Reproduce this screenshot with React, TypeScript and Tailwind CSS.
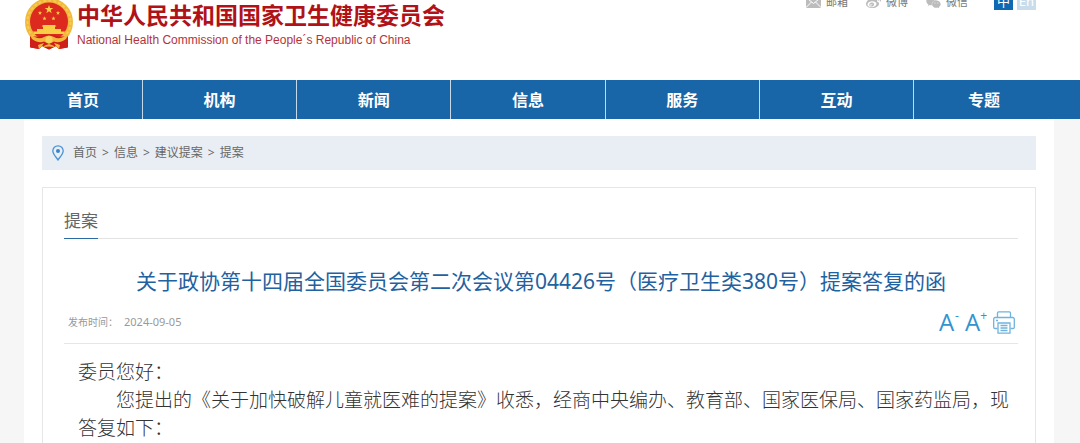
import React from "react";
import { FaWeibo, FaWeixin } from "react-icons/fa";

const navItems = ["首页", "机构", "新闻", "信息", "服务", "互动", "专题"];

const crumbs = ["首页", "信息", "建议提案", "提案"];

const STAR = "0,-1 .24,-.32 .95,-.31 .38,.12 .59,.81 0,.4 -.59,.81 -.38,.12 -.95,-.31 -.24,-.32";

const Emblem = () => (
  <svg viewBox="0 0 50 52" className="h-[52px] w-[50px] shrink-0" aria-hidden="true">
    <path d="M6 34 L6 49.500 L15 51 L18 48 L25 51.500 L32 48 L35 51 L44 49.500 L44 34Z" fill="#cf1f1b" />
    <circle cx="25" cy="24" r="24" fill="#f0b93a" />
    <circle cx="25" cy="24" r="21.500" fill="none" stroke="#f6cb55" strokeWidth="2" strokeDasharray="3 2" />
    <circle cx="25" cy="23.500" r="19" fill="#dc2a1e" />
    <g fill="#f9cf45">
      <polygon points={STAR} transform="translate(25 11.500) scale(4.500)" />
      <polygon points={STAR} transform="translate(16 15) scale(2.200)" />
      <polygon points={STAR} transform="translate(34 15) scale(2.200)" />
      <polygon points={STAR} transform="translate(20.500 20.500) scale(2.200)" />
      <polygon points={STAR} transform="translate(29.500 20.500) scale(2.200)" />
      <path d="M19 27h12l1.500 1.500H31V31h6v2.500h4L40 36H10l-1-2.500h4V31h6v-2.500h-1.500z" />
    </g>
    <path d="M6 38.500 L15 38.500 Q25 35 35 38.500 L44 38.500 L43 49.500 L35 51 L32 48 L25 51.500 L18 48 L15 51 L7 49.500Z" fill="#cf1f1b" />
    <path d="M5 35 Q14 43 20 39 Q25 36 30 39 Q36 43 45 35 L42 41 Q35 46 30 43.500 L25 46 L20 43.500 Q15 46 8 41Z" fill="#f3b83b" />
    <circle cx="25" cy="41.500" r="3.500" fill="#f8d25c" />
    <path d="M14 47 L20 45 L18 48 L15 51Z M36 47 L30 45 L32 48 L35 51Z M21 47.500 L25 46 L29 47.500 L31 49 L25 48.500 L19 49Z" fill="#f3b83b" />
  </svg>
);

const MailIcon = () => (
  <svg viewBox="0 0 15 12" className="h-3 w-[15px]" aria-hidden="true">
    <rect width="15" height="12" rx="1" fill="#bcbcbc" />
    <path d="M0 1.500 L7.500 7.500 L15 1.500 M0 11.500 L5.500 6 M15 11.500 L9.500 6" fill="none" stroke="#fff" />
  </svg>
);

const PinIcon = () => (
  <svg viewBox="0 0 12 16" className="h-4 w-3" aria-hidden="true">
    <path
      d="M6 15 C4.500 12.500 .8 9 .8 6 A5.200 5.200 0 0 1 11.200 6 C11.200 9 7.500 12.500 6 15Z"
      fill="none"
      stroke="#4b93d4"
      strokeWidth="1.300"
    />
    <circle cx="6" cy="6" r="2" fill="#3a83c8" />
  </svg>
);

const PrintIcon = () => (
  <svg viewBox="0 0 22 23" className="h-[23px] w-[22px]" fill="none" stroke="#6fb3de" strokeWidth="1.300" aria-hidden="true">
    <path d="M4.500 6.500V2a1.200 1.200 0 0 1 1.200-1.200h10.600A1.200 1.200 0 0 1 17.500 2v4.500" />
    <path d="M4.500 17.500H2A1.300 1.300 0 0 1 .7 16.200V8A1.500 1.500 0 0 1 2.200 6.500h17.600A1.500 1.500 0 0 1 21.300 8v8.200a1.300 1.300 0 0 1-1.300 1.300h-2.500" />
    <path d="M5 12h12v10.200H5zM3 9.500h2M7.500 14.500h7M7.500 17h7M7.500 19.500h7" />
  </svg>
);

const Header = () => (
  <header className="flex h-20 justify-between overflow-hidden pr-[18px]">
    <a href="#" className="-mt-0.5 flex items-start gap-[3px]">
      <Emblem />
      <span className="flex flex-col pt-0.5">
        <span className="text-[23px] leading-[30px] font-bold whitespace-nowrap text-[#b01217]">
          中华人民共和国国家卫生健康委员会
        </span>
        <span className="font-['Liberation_Sans',Arial,sans-serif] text-xs leading-5 whitespace-nowrap text-[#b5323a]">
          National Health Commission of the People´s Republic of China
        </span>
      </span>
    </a>
    <div className="-mt-2 flex items-start text-[11px] leading-[18px] text-[#777]">
      <a href="#" className="mr-[18px] flex items-center gap-[5px] leading-5">
        <MailIcon />
        邮箱
      </a>
      <a href="#" className="mr-[18px] flex items-center gap-[5px] leading-5">
        <FaWeibo className="size-[15px] text-[#bcbcbc]" />
        微博
      </a>
      <a href="#" className="mr-[26px] flex items-center gap-[5px] leading-5">
        <FaWeixin className="size-[15px] text-[#bcbcbc]" />
        微信
      </a>
      <a href="#" className="mr-1 w-[19px] bg-[#0f68b2] text-center text-[13px] text-white">
        中
      </a>
      <a href="#" className="w-[19px] bg-[#c9dcec] text-center text-[13px] text-white">
        En
      </a>
    </div>
  </header>
);

const Nav = () => (
  <nav className="bg-[#1865a7] pr-[26px] pl-6">
    <ul className="flex h-[39px] text-base leading-10 font-bold text-white">
      {navItems.map((item) => (
        <li
          key={item}
          className="flex-1 border-r border-[#c5d9ea] text-center first:w-[119px] first:flex-none last:w-[140px] last:flex-none last:border-r-0"
        >
          <a href="#" className="block">
            {item}
          </a>
        </li>
      ))}
    </ul>
  </nav>
);

const Breadcrumb = () => (
  <div className="flex h-[34px] items-center gap-[9px] bg-[#e9eef4] px-2.5 text-xs text-[#666]">
    <PinIcon />
    <div className="flex gap-[5px]">
      {crumbs.map((crumb, i) => (
        <React.Fragment key={crumb}>
          {i > 0 && <span>&gt;</span>}
          <a href="#">{crumb}</a>
        </React.Fragment>
      ))}
    </div>
  </div>
);

const Article = () => (
  <article className="mt-[17px] flex-1 border border-b-0 border-[#e6e6e6] pr-[17px] pl-[21px]">
    <div className="mt-4 flex border-b border-[#e3e3e3]">
      <h2 className="-mb-px border-b border-[#2b6ba3] text-[17px] leading-[34px] text-[#666]">提案</h2>
    </div>
    <h1 className="mt-[26px] text-center text-[21px] leading-8 text-[#1f629f]">
      关于政协第十四届全国委员会第二次会议第04426号（医疗卫生类380号）提案答复的函
    </h1>
    <div className="flex h-[47px] items-center justify-between border-b border-[#e6e6e6] pt-1 pr-[3px] pl-1">
      <p className="flex items-center gap-1.5 leading-4 text-[#999]">
        <span className="text-[10px]">发布时间：</span>
        <time className="text-[11px]">2024-09-05</time>
      </p>
      <div className="flex items-center gap-1.5 font-['Open_Sans','Noto_Sans',sans-serif] text-2xl leading-6 text-[#3393d0]">
        <button type="button" className="flex gap-px" aria-label="A-">
          A<span className="text-xs leading-3">-</span>
        </button>
        <button type="button" className="flex" aria-label="A+">
          A<span className="text-xs leading-3">+</span>
        </button>
        <button type="button" aria-label="打印">
          <PrintIcon />
        </button>
      </div>
    </div>
    <div className="mt-[13px] pr-2 pl-3.5 font-['Noto_Sans_CJK_SC',sans-serif] text-[19px] leading-7 font-light text-[#333]">
      <p>委员您好：</p>
      <p className="indent-[2em]">
        您提出的《关于加快破解儿童就医难的提案》收悉，经商中央编办、教育部、国家医保局、国家药监局，现答复如下：
      </p>
    </div>
  </article>
);

const App = () => (
  <div
    lang="zh-CN"
    className="flex min-h-screen flex-col bg-[#f6f6f6] font-['Noto_Sans','Noto_Sans_CJK_SC',sans-serif]"
  >
    <div className="bg-white pr-[26px] pl-6">
      <Header />
    </div>
    <Nav />
    <main className="mr-[26px] ml-6 flex flex-1 flex-col bg-white px-[18px] pt-[17px]">
      <Breadcrumb />
      <Article />
    </main>
  </div>
);

export default App;
